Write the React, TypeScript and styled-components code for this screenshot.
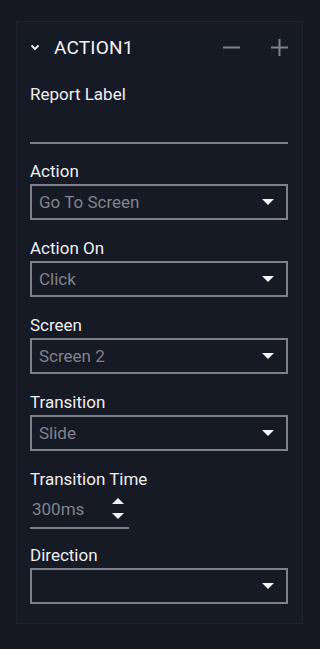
import React from 'react';
import styled, { createGlobalStyle } from 'styled-components';

const GlobalStyle = createGlobalStyle`
    html, body {
        margin: 0;
        padding: 0;
        background: #151821;
    }
    body {
        font-family: Roboto, "Liberation Sans", sans-serif;
        -webkit-font-smoothing: antialiased;
    }
`;

const Page = styled.div`
    width: 320px;
    height: 649px;
    padding: 21px 17px 0 16px;
    box-sizing: border-box;
    background: #151821;
`;

const Panel = styled.section`
    height: 603px;
    box-sizing: border-box;
    padding: 12px 14px 0 13px;
    background: #161a24;
    border: 1px solid #1f2330;
`;

const Header = styled.div`
    display: flex;
    align-items: center;
    height: 26px;
    margin-bottom: 24px;
`;

const Title = styled.h2`
    flex: 1;
    margin: 0 0 0 14px;
    font-size: 19px;
    font-weight: 400;
    color: #f2f2f4;
    letter-spacing: 0.2px;
`;

const IconButton = styled.button`
    display: flex;
    align-items: center;
    justify-content: center;
    width: 18px;
    height: 18px;
    padding: 0;
    border: none;
    background: none;
    margin-left: 30px;
`;

const Field = styled.div<{ $gap?: number }>`
    display: flex;
    flex-direction: column;
    margin-bottom: ${(p) => p.$gap ?? 18}px;
`;

const Label = styled.label`
    font-size: 17px;
    line-height: 20px;
    color: #eeeef0;
    margin-bottom: 3px;
`;

const LineInput = styled.div<{ $width?: number }>`
    display: flex;
    align-items: center;
    width: ${(p) => (p.$width ? `${p.$width}px` : '100%')};
    height: 37px;
    box-sizing: border-box;
    border-bottom: 2px solid #7c7f88;
`;

const SelectBox = styled.div`
    display: flex;
    align-items: center;
    justify-content: space-between;
    height: 36px;
    box-sizing: border-box;
    padding: 0 12px 0 7px;
    border: 2px solid #7e818a;
`;

const Value = styled.span`
    font-size: 17px;
    color: #80838c;
`;

const Caret = styled.span`
    width: 0;
    height: 0;
    border-left: 6px solid transparent;
    border-right: 6px solid transparent;
    border-top: 6px solid #f4f4f6;
`;

const NumberValue = styled(Value)`
    flex: 1;
    padding-left: 2px;
    margin-top: -2px;
`;

const Spinner = styled.div`
    display: flex;
    flex-direction: column;
    gap: 9px;
    margin-right: 5px;
    margin-top: -3px;
`;

const Arrow = styled.span<{ $up?: boolean }>`
    width: 0;
    height: 0;
    border-left: 6px solid transparent;
    border-right: 6px solid transparent;
    ${(p) => (p.$up ? 'border-bottom: 6px solid #eeeef0;' : 'border-top: 6px solid #eeeef0;')}
`;

const Chevron = () => (
    <svg width="10" height="7" viewBox="0 0 10 7">
        <path d="M1.5 1.5 L5 5 L8.5 1.5" fill="none" stroke="#f2f2f4" strokeWidth="1.8" />
    </svg>
);

const Minus = () => (
    <svg width="17" height="17" viewBox="0 0 17 17">
        <path d="M0 8.5 H17" stroke="#7f828b" strokeWidth="2" />
    </svg>
);

const Plus = () => (
    <svg width="17" height="17" viewBox="0 0 17 17">
        <path d="M0 8.5 H17 M8.5 0 V17" stroke="#7f828b" strokeWidth="2" />
    </svg>
);

const Select: React.FC<{ label: string; value?: string }> = ({ label, value }) => (
    <Field>
        <Label>{label}</Label>
        <SelectBox>
            <Value>{value}</Value>
            <Caret />
        </SelectBox>
    </Field>
);

const App: React.FC = () => {
    return (
        <Page>
            <GlobalStyle />
            <Panel>
                <Header>
                    <Chevron />
                    <Title>ACTION1</Title>
                    <IconButton>
                        <Minus />
                    </IconButton>
                    <IconButton>
                        <Plus />
                    </IconButton>
                </Header>
                <Field $gap={17}>
                    <Label>Report Label</Label>
                    <LineInput />
                </Field>
                <Select label="Action" value="Go To Screen" />
                <Select label="Action On" value="Click" />
                <Select label="Screen" value="Screen 2" />
                <Select label="Transition" value="Slide" />
                <Field $gap={16}>
                    <Label>Transition Time</Label>
                    <LineInput $width={99}>
                        <NumberValue>300ms</NumberValue>
                        <Spinner>
                            <Arrow $up />
                            <Arrow />
                        </Spinner>
                    </LineInput>
                </Field>
                <Select label="Direction" />
            </Panel>
        </Page>
    );
};

export default App;
